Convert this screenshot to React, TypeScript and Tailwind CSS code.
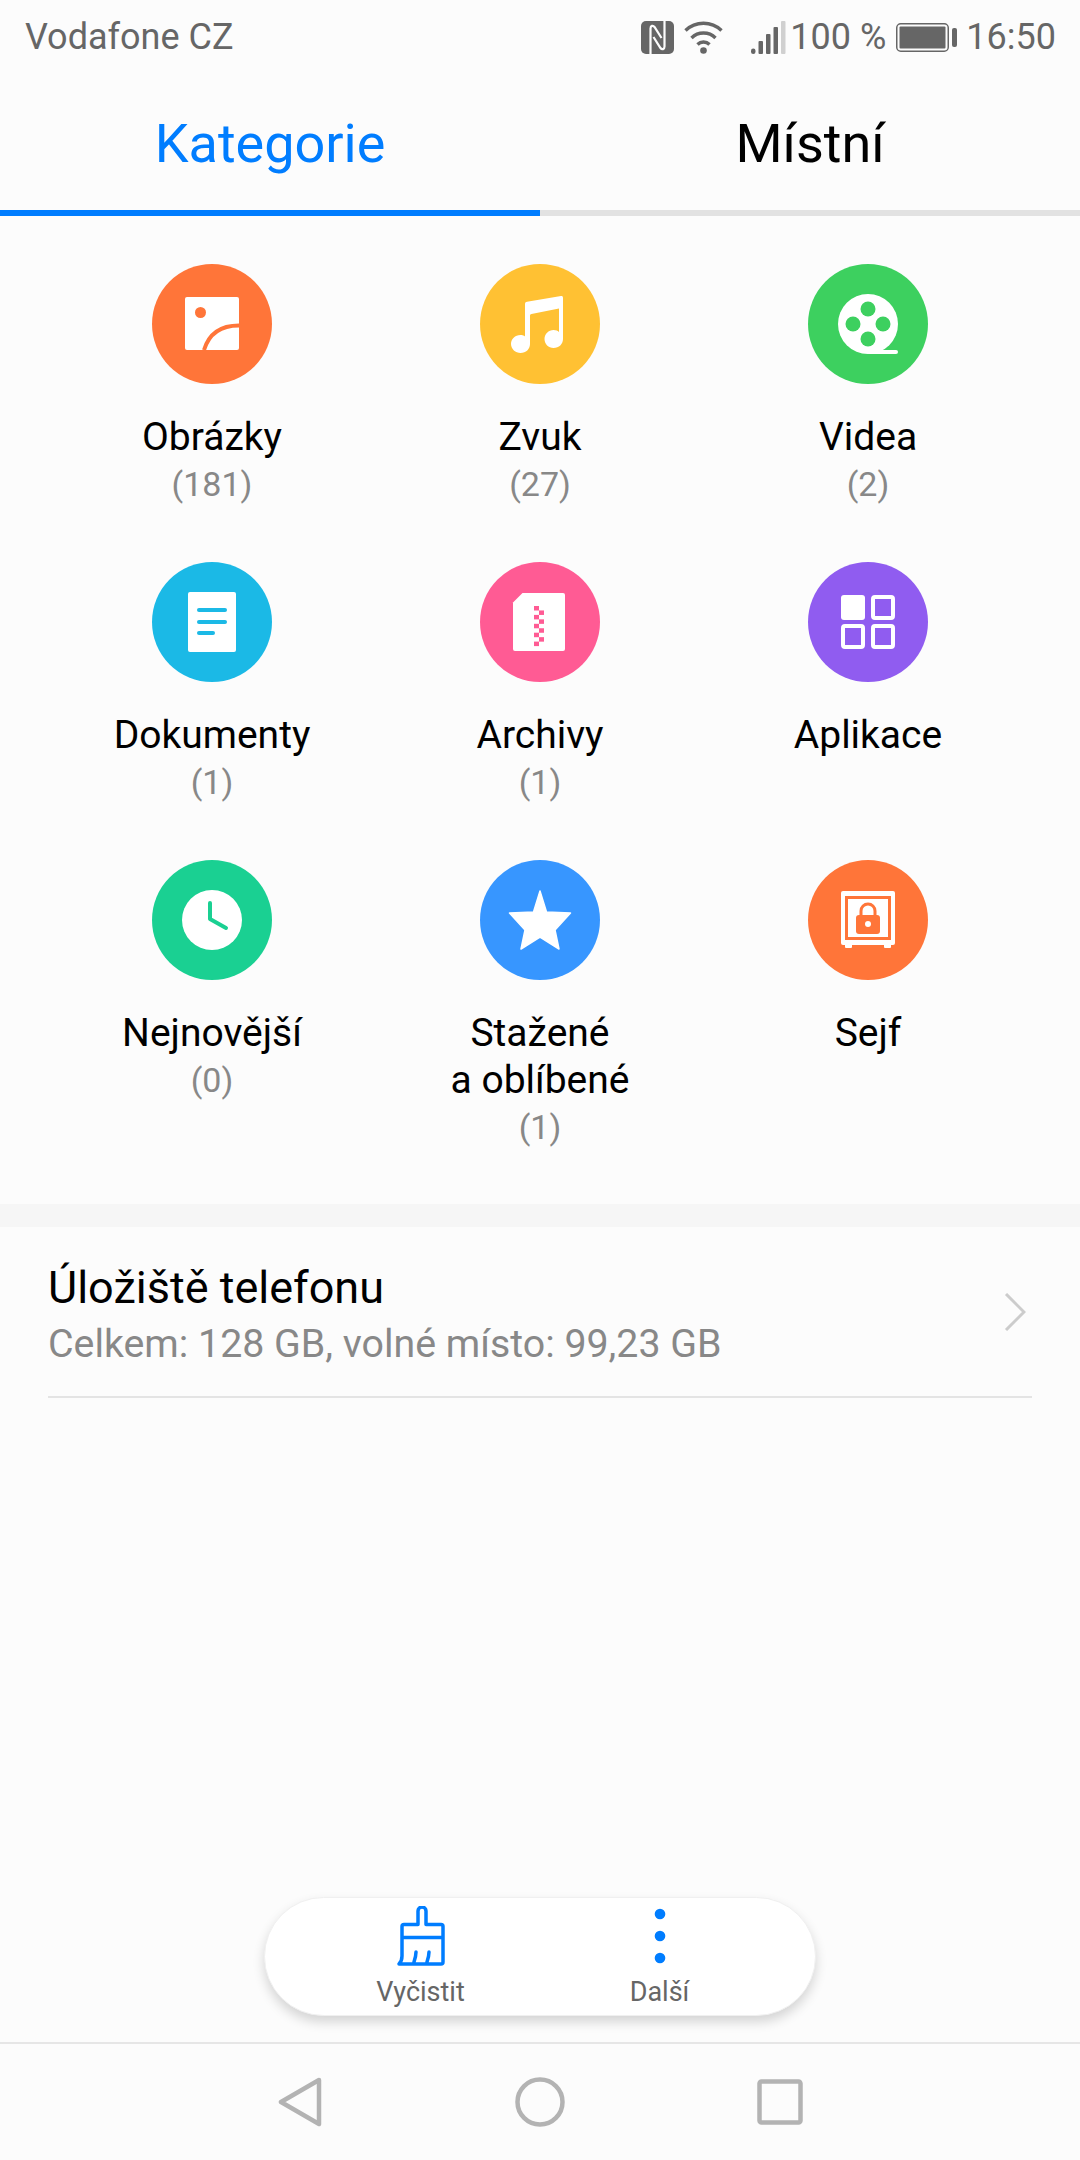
import React from "react";

const Obr = () => (
  <svg viewBox="0 0 120 120" className="w-[120px] h-[120px]">
    <rect x="33" y="33" width="54" height="53" rx="2" fill="#fff" />
    <circle cx="48.500" cy="48.500" r="5.500" fill="#ff7539" />
    <path d="M87 61.500c-18 0-30 8-35 24.500" fill="none" stroke="#ff7539" strokeWidth="4" />
  </svg>
);
const Note = () => (
  <svg viewBox="0 0 120 120" className="w-[120px] h-[120px]">
    <path fill="#fff" d="M45 40c0-1.500 1-2 2-2.200L81 32c1.500-.3 2 .5 2 2v41c0 5-4 9-9.500 9-5 0-9-4-9-9s4-9 9-9c2.500 0 4.500.7 5.500 2V44.500L51.500 50c-1 .2-1.500.8-1.500 1.800V80c0 5-4 9-9.500 9-5 0-9.500-4-9.500-9s4-9 9.500-9c2 0 3.500.5 4.500 1.500z" />
  </svg>
);
const Film = () => (
  <svg viewBox="0 0 120 120" className="w-[120px] h-[120px]">
    <circle cx="60" cy="60" r="30" fill="#fff" />
    <rect x="60" y="86" width="30" height="4" rx="2" fill="#fff" />
    <circle cx="60" cy="45" r="7.500" fill="#3dd05f" />
    <circle cx="60" cy="75" r="7.500" fill="#3dd05f" />
    <circle cx="45" cy="60" r="7.500" fill="#3dd05f" />
    <circle cx="75" cy="60" r="7.500" fill="#3dd05f" />
  </svg>
);
const Doc = () => (
  <svg viewBox="0 0 120 120" className="w-[120px] h-[120px]">
    <rect x="36" y="30" width="48" height="60" rx="2" fill="#fff" />
    <rect x="45" y="46" width="30" height="4" rx="2" fill="#1bb9e6" />
    <rect x="45" y="58" width="30" height="4" rx="2" fill="#1bb9e6" />
    <rect x="45" y="69" width="18" height="4" rx="2" fill="#1bb9e6" />
  </svg>
);
const Zip = () => (
  <svg viewBox="0 0 120 120" className="w-[120px] h-[120px]">
    <path fill="#fff" d="M42.500 31H83a2 2 0 0 1 2 2v54a2 2 0 0 1-2 2H35a2 2 0 0 1-2-2V40.500z" />
    {[0, 1, 2, 3, 4, 5, 6, 7, 8].map((i) => (
      <rect key={i} x={i % 2 === 0 ? 54 : 59} y={44 + i * 4.45} width="5" height="4.500" fill="#ff5b94" />
    ))}
  </svg>
);
const Apps = () => (
  <svg viewBox="0 0 120 120" className="w-[120px] h-[120px]">
    <rect x="33" y="33" width="24" height="25" rx="3" fill="#fff" />
    <rect x="65" y="35" width="20" height="21" rx="2" fill="none" stroke="#fff" strokeWidth="4" />
    <rect x="35" y="64" width="20" height="21" rx="2" fill="none" stroke="#fff" strokeWidth="4" />
    <rect x="65" y="64" width="20" height="21" rx="2" fill="none" stroke="#fff" strokeWidth="4" />
  </svg>
);
const Clock = () => (
  <svg viewBox="0 0 120 120" className="w-[120px] h-[120px]">
    <circle cx="60" cy="60" r="30" fill="#fff" />
    <path d="M58 43v16l16 9" fill="none" stroke="#1ad092" strokeWidth="4" strokeLinecap="round" strokeLinejoin="round" />
  </svg>
);
const Star = () => (
  <svg viewBox="0 0 120 120" className="w-[120px] h-[120px]">
    <path fill="#fff" stroke="#fff" strokeWidth="1.500" strokeLinejoin="round" d="M60 31l6.500 21 24 1-15.500 17 4 19-19-12-19 12 4-19-15.500-17 24-1z" />
  </svg>
);
const Safe = () => (
  <svg viewBox="0 0 120 120" className="w-[120px] h-[120px]">
    <rect x="33" y="31" width="54" height="54" rx="2" fill="#fff" />
    <rect x="37" y="84" width="7" height="4" rx="1" fill="#fff" />
    <rect x="76" y="84" width="7" height="4" rx="1" fill="#fff" />
    <rect x="38.500" y="37.500" width="43" height="41" fill="none" stroke="#ff7539" strokeWidth="3" />
    <path d="M53 56v-5a7 7 0 0 1 14 0v5" fill="none" stroke="#ff7539" strokeWidth="3" />
    <rect x="48" y="55" width="24" height="19" rx="3" fill="#ff7539" />
    <circle cx="60" cy="64" r="3" fill="#fff" />
  </svg>
);

type Item = { icon: React.ReactNode; bg: string; label: React.ReactNode; count?: string };
const items: Item[] = [
  { icon: <Obr />, bg: "bg-[#ff7539]", label: "Obrázky", count: "(181)" },
  { icon: <Note />, bg: "bg-[#ffc133]", label: "Zvuk", count: "(27)" },
  { icon: <Film />, bg: "bg-[#3dd05f]", label: "Videa", count: "(2)" },
  { icon: <Doc />, bg: "bg-[#1bb9e6]", label: "Dokumenty", count: "(1)" },
  { icon: <Zip />, bg: "bg-[#ff5b94]", label: "Archivy", count: "(1)" },
  { icon: <Apps />, bg: "bg-[#905cf0]", label: "Aplikace" },
  { icon: <Clock />, bg: "bg-[#1ad092]", label: "Nejnovější", count: "(0)" },
  { icon: <Star />, bg: "bg-[#3796ff]", label: <>Stažené<br />a oblíbené</>, count: "(1)" },
  { icon: <Safe />, bg: "bg-[#ff7539]", label: "Sejf" },
];

const Cat = ({ it }: { it: Item }) => (
  <div className="flex flex-col items-center">
    <div className={`w-[120px] h-[120px] rounded-full ${it.bg}`}>{it.icon}</div>
    <div className="mt-[30px] text-[39px] leading-[47px] text-black text-center">{it.label}</div>
    {it.count && <div className="text-[34px] leading-[46px] text-[#888888]">{it.count}</div>}
  </div>
);

export default function App() {
  return (
    <div className="w-[1080px] h-[2160px] flex flex-col bg-[#fcfcfc] overflow-hidden font-['Roboto',sans-serif]">
      <div className="h-[74px] flex items-center justify-between pl-[25px] pr-[24px] text-[#666666] shrink-0">
        <span className="text-[36px] leading-none">Vodafone CZ</span>
        <div className="flex items-center">
          <svg viewBox="0 0 33 33" className="w-[33px] h-[33px]">
            <rect width="33" height="33" rx="5" fill="#666" />
            <path d="M9.500 33V7.500c0-3 2.500-3.500 4-1.500l7 11M23.500 0v25.500c0 3-2.500 3.500-4 1.500l-7-11" fill="none" stroke="#fcfcfc" strokeWidth="2.200" />
          </svg>
          <svg viewBox="0 0 39 33" className="w-[39px] h-[33px] ml-[10px]">
            <path d="M1.500 9.500a26 26 0 0 1 36 0M7.500 17a17 17 0 0 1 24 0M13.500 23.500a8.500 8.500 0 0 1 12 0" fill="none" stroke="#666" strokeWidth="3.400" />
            <circle cx="19.500" cy="29.500" r="3.300" fill="#666" />
          </svg>
          <svg viewBox="0 0 35 33" className="w-[35px] h-[33px] ml-[28px]">
            <rect x="0" y="27.500" width="4.500" height="5.500" rx="2.200" fill="#666" />
            <rect x="7.500" y="20" width="4.500" height="13" rx="1" fill="#666" />
            <rect x="15" y="13" width="4.500" height="20" rx="1" fill="#666" />
            <rect x="22.500" y="6" width="4.500" height="27" rx="1" fill="#666" />
            <rect x="30" y="0" width="4.500" height="33" rx="1" fill="#d0d0d0" />
          </svg>
          <span className="ml-[4px] text-[36px] leading-none">100 %</span>
          <svg viewBox="0 0 61 29" className="w-[61px] h-[29px] ml-[10px]">
            <rect x=".75" y=".75" width="51.500" height="27.500" rx="4" fill="none" stroke="#666" strokeWidth="1.500" />
            <rect x="3.500" y="3.500" width="46" height="22" rx="1" fill="#666" />
            <rect x="56" y="5" width="5" height="19" rx="2" fill="#666" />
          </svg>
          <span className="ml-[9px] text-[36px] leading-none">16:50</span>
        </div>
      </div>

      <div className="flex h-[142px] shrink-0">
        <div className="flex-1 flex flex-col">
          <div className="flex-1 flex items-center justify-center pt-[2px] text-[54px] text-[#007dff]">Kategorie</div>
          <div className="h-[6px] bg-[#007dff]" />
        </div>
        <div className="flex-1 flex flex-col">
          <div className="flex-1 flex items-center justify-center pt-[2px] text-[54px] text-black">Místní</div>
          <div className="h-[6px] bg-[#e2e2e2]" />
        </div>
      </div>

      <div className="h-[988px] shrink-0 pt-[48px] px-[48px] grid grid-cols-3 grid-rows-[298px_298px_1fr] justify-items-center">
        {items.map((it, i) => (
          <div key={i} className="w-[328px]"><Cat it={it} /></div>
        ))}
      </div>

      <div className="h-[23px] bg-[#f6f6f6] shrink-0" />

      <div className="mx-[48px] h-[171px] shrink-0 flex items-center justify-between border-b-2 border-[#e4e4e4]">
        <div className="flex flex-col mt-[8px]">
          <span className="text-[45px] leading-[58px] text-black">Úložiště telefonu</span>
          <span className="text-[39.3px] leading-[55px] text-[#888888]">Celkem: 128 GB, volné místo: 99,23 GB</span>
        </div>
        <svg viewBox="0 0 22 38" className="w-[22px] h-[38px] mr-[6px]">
          <path d="M2 1l18 18L2 37" fill="none" stroke="#cccccc" strokeWidth="3" />
        </svg>
      </div>

      <div className="flex-1" />

      <div className="w-[552px] h-[119px] mx-auto mb-[26px] shrink-0 rounded-[60px] bg-white border border-[#f0f0f0] shadow-[0_6px_12px_rgba(0,0,0,0.16)] flex">
        <div className="flex-1 flex flex-col items-center pl-[36px]">
          <svg viewBox="0 0 48 60" className="w-[48px] h-[60px] mt-[8px]">
            <path d="M21 18.500V5a4 4 0 0 1 8 0v13.500h15a2 2 0 0 1 2 2V56a2 2 0 0 1-2 2H2c2-2 3-5 3-8V20.500a2 2 0 0 1 2-2zM5 31.500h41M17 56c1-3 2-6 2-10M30 56c1-3 2-6 2-10" fill="none" stroke="#007dff" strokeWidth="3.500" strokeLinejoin="round" strokeLinecap="round" />
          </svg>
          <span className="text-[27px] leading-[36px] text-[#666666] mt-[8px]">Vyčistit</span>
        </div>
        <div className="flex-1 flex flex-col items-center pr-[36px]">
          <svg viewBox="0 0 12 60" className="w-[12px] h-[60px] mt-[8px]">
            <circle cx="6" cy="8" r="5.300" fill="#007dff" />
            <circle cx="6" cy="30" r="5.300" fill="#007dff" />
            <circle cx="6" cy="52" r="5.300" fill="#007dff" />
          </svg>
          <span className="text-[27px] leading-[36px] text-[#666666] mt-[8px]">Další</span>
        </div>
      </div>

      <div className="h-[118px] shrink-0 border-t-2 border-[#e6e6e6] flex items-center justify-center">
        <div className="w-[720px] grid grid-cols-3 justify-items-center items-center">
          <svg viewBox="0 0 44 50" className="w-[44px] h-[50px]">
            <path d="M41 3L3 25l38 22z" fill="none" stroke="#b3b3b3" strokeWidth="4.500" strokeLinejoin="round" />
          </svg>
          <svg viewBox="0 0 50 50" className="w-[50px] h-[50px]">
            <circle cx="25" cy="25" r="22.500" fill="none" stroke="#b3b3b3" strokeWidth="4.500" />
          </svg>
          <svg viewBox="0 0 46 46" className="w-[46px] h-[46px]">
            <rect x="2.500" y="2.500" width="41" height="41" rx="2" fill="none" stroke="#b3b3b3" strokeWidth="4.500" />
          </svg>
        </div>
      </div>
    </div>
  );
}
